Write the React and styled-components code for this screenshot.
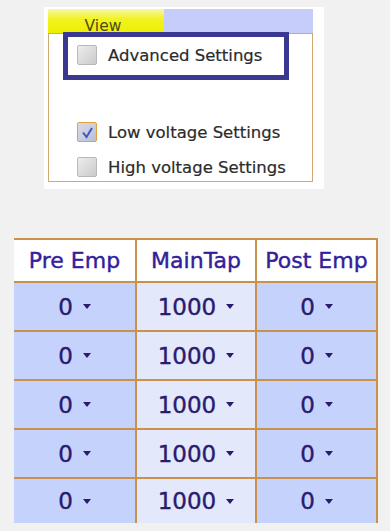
import React from 'react';
import styled, { createGlobalStyle } from 'styled-components';

const GlobalStyle = createGlobalStyle`
  html, body {
    margin: 0;
    padding: 0;
    background: #f1f1f1;
  }
  body {
    font-family: "DejaVu Sans", Verdana, sans-serif;
  }
`;

const Page = styled.div`
  width: 390px;
  height: 531px;
  overflow: hidden;
  padding-top: 7px;
  box-sizing: border-box;
`;

const Panel = styled.section`
  margin-left: 44px;
  width: 280px;
  height: 182px;
  background: #fff;
  box-sizing: border-box;
  padding: 2px 11px 7px 4px;
  display: flex;
  flex-direction: column;
`;

const TabStrip = styled.div`
  display: flex;
  height: 24px;
  flex-shrink: 0;
  background: #c6cdfa;
`;

const Tab = styled.div`
  width: 110px;
  background: linear-gradient(#f7f7a8, #f2f222 40%, #eeee00);
  color: #4e4c18;
  font-size: 15.5px;
  line-height: 16px;
  display: flex;
  align-items: flex-end;
  justify-content: center;
  padding-right: 6px;
  margin-bottom: -1px;
`;

const Fieldset = styled.div`
  flex: 1;
  border: 1.5px solid #cfa872;
  display: flex;
  flex-direction: column;
`;

const Highlight = styled.div`
  position: relative;
  z-index: 1;
  margin: -2px 0 0 14px;
  width: 226px;
  height: 48px;
  box-sizing: border-box;
  border: 5px solid #3b3892;
  background: #fff;
  display: flex;
  align-items: center;
  padding: 0 0 2px 9px;
`;

const OptionList = styled.div`
  margin-top: auto;
  padding: 0 0 0 28px;
  display: flex;
  flex-direction: column;
  gap: 7px;
`;

const Option = styled.label`
  display: flex;
  align-items: center;
  height: 28px;
  gap: 11px;
  font-size: 16.5px;
  color: #2b2b2b;
  -webkit-text-stroke: 0.2px #2b2b2b;
`;

const OptionText = styled.span`
  font-size: 16.5px;
  color: #2b2b2b;
  margin-left: 11px;
  -webkit-text-stroke: 0.2px #2b2b2b;
`;

const Box = styled.span`
  width: 20px;
  height: 20px;
  box-sizing: border-box;
  border-radius: 2px;
  border: 1px solid ${p => (p.checked ? '#e0a13e' : '#b9b9b9')};
  background: ${p =>
    p.checked
      ? 'linear-gradient(135deg, #d9dbe6, #b9bfd6)'
      : 'linear-gradient(135deg, #ececec, #cbcbcb)'};
  display: flex;
  align-items: center;
  justify-content: center;
  flex-shrink: 0;
`;

const CheckBox = ({ checked }) => (
  <Box checked={checked}>
    {checked && (
      <svg width="13" height="13" viewBox="0 0 13 13">
        <path d="M2 6.5 L5.5 11 L11 2" fill="none" stroke="#3a56c8" strokeWidth="2" />
      </svg>
    )}
  </Box>
);

const Grid = styled.div`
  margin: 49px 0 0 14px;
  width: 364px;
  box-sizing: border-box;
  display: grid;
  grid-template-columns: 121px 120px 121px;
  border-top: 2px solid #c8924a;
  border-right: 2px solid #c8924a;
`;

const HeadCell = styled.div`
  height: 43px;
  box-sizing: border-box;
  background: #fff;
  border-bottom: 2px solid #c8924a;
  border-left: ${p => (p.first ? 'none' : '2px solid #c8924a')};
  display: flex;
  align-items: center;
  justify-content: center;
  font-size: 22px;
  color: #33209a;
  -webkit-text-stroke: 0.4px #33209a;
  white-space: nowrap;
`;

const Cell = styled.div`
  height: ${p => (p.last ? 44 : 49)}px;
  box-sizing: border-box;
  background: ${p => (p.light ? '#e3e9fb' : '#c5d3fc')};
  border-bottom: ${p => (p.last ? 'none' : '2px solid #c8924a')};
  border-left: ${p => (p.first ? 'none' : '2px solid #c8924a')};
  display: flex;
  align-items: center;
  justify-content: center;
  font-size: 23px;
  color: #2a1b6e;
  -webkit-text-stroke: 0.4px #2a1b6e;
`;

const Caret = styled.span`
  width: 0;
  height: 0;
  margin-left: 10px;
  border-left: 4px solid transparent;
  border-right: 4px solid transparent;
  border-top: 5px solid #2a1b6e;
`;

const columns = [
  { title: 'Pre Emp', value: '0', light: false },
  { title: 'MainTap', value: '1000', light: true },
  { title: 'Post Emp', value: '0', light: false },
];

const rows = [0, 1, 2, 3, 4];

export default function App() {
  return (
    <Page>
      <GlobalStyle />
      <Panel>
        <TabStrip>
          <Tab>View</Tab>
        </TabStrip>
        <Fieldset>
          <Highlight>
            <CheckBox />
            <OptionText>Advanced Settings</OptionText>
          </Highlight>
          <OptionList>
            <Option>
              <CheckBox checked />
              Low voltage Settings
            </Option>
            <Option>
              <CheckBox />
              High voltage Settings
            </Option>
          </OptionList>
        </Fieldset>
      </Panel>
      <Grid>
        {columns.map((c, i) => (
          <HeadCell key={c.title} first={i === 0}>{c.title}</HeadCell>
        ))}
        {rows.map(r =>
          columns.map((c, i) => (
            <Cell key={`${r}-${i}`} first={i === 0} light={c.light} last={r === rows.length - 1}>
              {c.value}
              <Caret />
            </Cell>
          ))
        )}
      </Grid>
    </Page>
  );
}
